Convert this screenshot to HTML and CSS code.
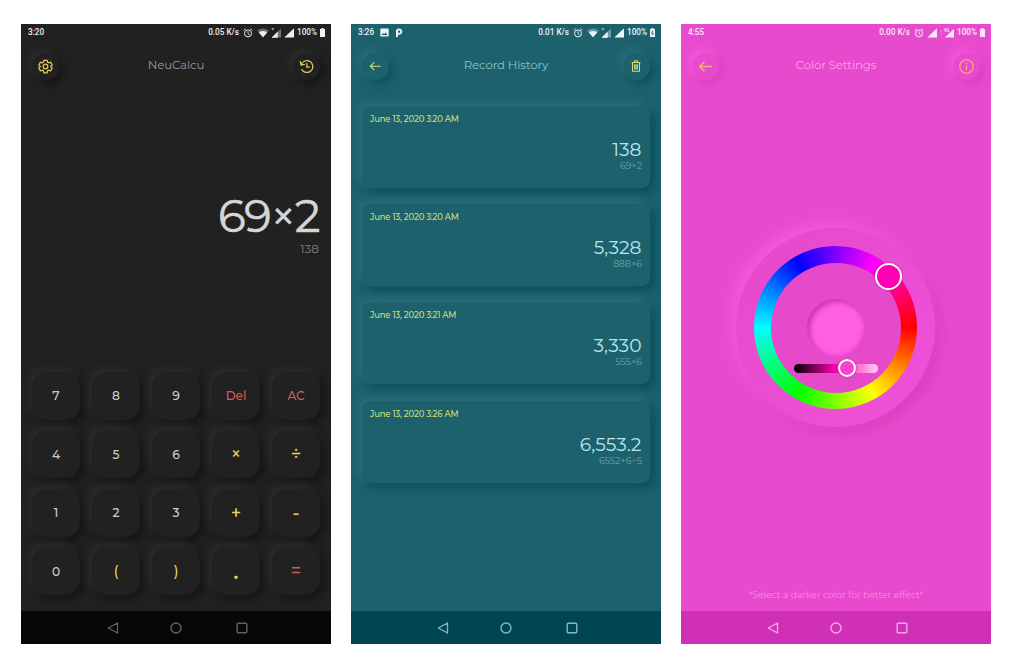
FILE: index.html
```html
<!DOCTYPE html>
<html lang="en">
<head>
<meta charset="utf-8">
<title>NeuCalcu</title>
<link rel="stylesheet" href="styles.css">
</head>
<body>
<svg class="defs" aria-hidden="true">
  <symbol id="alarm" viewBox="0 0 10 10"><g fill="none" stroke="currentColor"><circle cx="5" cy="5.4" r="3.5" stroke-width="1"/><path d="M.6 2.3 2.7.6M9.4 2.3 7.3.6M5 3.3v2.4l1.6 1" stroke-width=".9"/></g></symbol>
  <symbol id="wifi" viewBox="0 0 12 10"><path d="M0 2.5Q6-1.5 12 2.5L6 9.5z" fill="currentColor" opacity=".35"/><path d="M1.8 4.4Q6 1.5 10.2 4.4L6 9.3z" fill="currentColor"/></symbol>
  <symbol id="signal" viewBox="0 0 10 10"><path d="M10 .2V9.5H.3z" fill="currentColor"/></symbol>
  <symbol id="weak" viewBox="0 0 10 10"><path d="M10 .5V9.5H1z" fill="currentColor" opacity=".4"/><path d="M6.4 4.2V9.5H1zM.8 0l2 2m0-2-2 2" fill="currentColor" stroke="currentColor" stroke-width=".6"/></symbol>
  <symbol id="battery" viewBox="0 0 5 9"><path d="M1.4 0h2.2v1H5v8H0V1h1.4z" fill="currentColor"/></symbol>
  <symbol id="back" viewBox="0 0 14 14"><path d="M13 7H1.5M6 2.6 1.5 7 6 11.4" fill="none" stroke="currentColor" stroke-width="1.2"/></symbol>
  <symbol id="nav-back" viewBox="0 0 12 12"><path d="M10.5 1v10L1.3 6z" fill="none" stroke="currentColor" stroke-width="1.3" stroke-linejoin="round"/></symbol>
  <symbol id="nav-home" viewBox="0 0 12 12"><circle cx="6" cy="6" r="5" fill="none" stroke="currentColor" stroke-width="1.4"/></symbol>
  <symbol id="nav-apps" viewBox="0 0 12 12"><rect x="1.2" y="1.2" width="9.6" height="9.6" rx="1" fill="none" stroke="currentColor" stroke-width="1.4"/></symbol>
</svg>
<main class="gallery">
  <section class="phone dark">
    <div class="status">
      <span class="clock">3:20</span>
      <span class="rate">0.05 K/s</span>
      <svg class="i-alarm"><use href="#alarm"/></svg><svg class="i-wifi"><use href="#wifi"/></svg><svg class="i-weak"><use href="#weak"/></svg><svg class="i-signal"><use href="#signal"/></svg>
      <span class="percent">100%</span><svg class="i-battery"><use href="#battery"/></svg>
    </div>
    <header class="bar">
      <button class="round"><svg width="15" height="15" viewBox="0 0 24 24" fill="none" stroke="currentColor" stroke-width="2" stroke-linejoin="round"><path d="M9.4 2h5.2l.7 3.1 1.7 1 3.1-1 2.6 4.5-2.4 2.2v.4l2.4 2.2-2.6 4.5-3.1-1-1.7 1-.7 3.1H9.4l-.7-3.1-1.7-1-3.1 1-2.6-4.5 2.4-2.2v-.4L1.3 9.6l2.6-4.5 3.1 1 1.7-1z"/><circle cx="12" cy="12" r="3.7"/></svg></button>
      <h1>NeuCalcu</h1>
      <button class="round"><svg width="15" height="15" viewBox="0 0 24 24" fill="none" stroke="currentColor" stroke-width="2"><path d="M3.5 9.5A9.5 9.5 0 1 1 4 16M2 3.5l1.3 6.3 6-1.3M12.5 6.5v6.5h5"/></svg></button>
    </header>
    <div class="display"><div class="expression">69×2</div><div class="result">138</div></div>
    <div class="keys">
      <button>7</button><button>8</button><button>9</button><button class="red">Del</button><button class="red">AC</button>
      <button>4</button><button>5</button><button>6</button><button class="op">×</button><button class="op">÷</button>
      <button>1</button><button>2</button><button>3</button><button class="op">+</button><button class="op">-</button>
      <button>0</button><button class="paren">(</button><button class="paren">)</button><button class="op dot">.</button><button class="op red">=</button>
    </div>
    <nav class="nav"><svg><use href="#nav-back"/></svg><svg><use href="#nav-home"/></svg><svg><use href="#nav-apps"/></svg></nav>
  </section>

  <section class="phone teal">
    <div class="status">
      <span class="clock">3:26</span>
      <svg class="i-photo" viewBox="0 0 9 9"><path fill-rule="evenodd" d="M1 .5h7q.7 0 .7.7v6.6q0 .7-.7.7H1q-.7 0-.7-.7V1.2Q.3.5 1 .5zM1.5 7h6L5.6 4.5 4.2 6.2 3.2 5z" fill="currentColor"/></svg>
      <svg class="i-app" viewBox="0 0 8 10"><path d="M2 2.5v5.8M1.9 3.800a2.200 2.200 0 1 1 2.200 2H2" fill="none" stroke="currentColor" stroke-width="2" stroke-linecap="round"/></svg>
      <span class="rate">0.01 K/s</span>
      <svg class="i-alarm"><use href="#alarm"/></svg><svg class="i-wifi"><use href="#wifi"/></svg><svg class="i-weak"><use href="#weak"/></svg><svg class="i-signal"><use href="#signal"/></svg>
      <span class="percent">100%</span><svg class="i-battery" viewBox="0 0 5 9"><path d="M1.4 0h2.2v1H5v8H0V1h1.4z" fill="currentColor"/><path d="M3 2.5 1.5 5.2h2L2 7.5" fill="none" stroke="#1c616c" stroke-width=".8"/></svg>
    </div>
    <header class="bar">
      <button class="round"><svg width="12.5" height="12.5"><use href="#back"/></svg></button>
      <h1>Record History</h1>
      <button class="round"><svg width="10" height="12" viewBox="0 0 10 12" fill="none" stroke="currentColor"><path d="M.5 2.5h9M3.5 2.3V.8h3v1.500M1.500 2.500v8.700h7V2.500M3.600 4.200v5.300M5 4.200v5.300M6.400 4.200v5.300" stroke-width="1.050"/></svg></button>
    </header>
    <div class="records">
      <article><time>June 13, 2020 3:20 AM</time><strong>138</strong><small>69×2</small></article>
      <article><time>June 13, 2020 3:20 AM</time><strong>5,328</strong><small>888×6</small></article>
      <article><time>June 13, 2020 3:21 AM</time><strong>3,330</strong><small>555×6</small></article>
      <article><time>June 13, 2020 3:26 AM</time><strong>6,553.2</strong><small>6552+6÷5</small></article>
    </div>
    <nav class="nav"><svg><use href="#nav-back"/></svg><svg><use href="#nav-home"/></svg><svg><use href="#nav-apps"/></svg></nav>
  </section>

  <section class="phone pink">
    <div class="status">
      <span class="clock">4:55</span>
      <span class="rate">0.00 K/s</span>
      <svg class="i-alarm"><use href="#alarm"/></svg><svg class="i-first"><use href="#signal"/></svg><svg class="i-lte" viewBox="0 0 14 10"><path d="M14 .8v8.700H4.800z" fill="currentColor"/><path d="M1 2v2M1 5v1.500" stroke="currentColor" stroke-width=".7" opacity=".7"/><text x="3.800" y="3.600" font-size="4.500" fill="currentColor">4G</text></svg>
      <span class="percent">100%</span><svg class="i-battery"><use href="#battery"/></svg>
    </div>
    <header class="bar">
      <button class="round"><svg width="15" height="15"><use href="#back"/></svg></button>
      <h1>Color Settings</h1>
      <button class="round"><svg width="15" height="15" viewBox="0 0 15 15" fill="none" stroke="currentColor"><circle cx="7.500" cy="7.500" r="6.700" stroke-width="1.100"/><path d="M7.500 6.200v5M7.500 3.800v1.200" stroke-width="1.100"/></svg></button>
    </header>
    <div class="picker">
      <div class="disc"><div class="hue"><div class="well"><div class="swatch"></div><div class="slider"><i class="thumb"></i></div></div><i class="hue-thumb"></i></div></div>
    </div>
    <p class="hint">*Select a darker color for better effect*</p>
    <nav class="nav"><svg><use href="#nav-back"/></svg><svg><use href="#nav-home"/></svg><svg><use href="#nav-apps"/></svg></nav>
  </section>
</main>
</body>
</html>
```
FILE: styles.css
```css
* { box-sizing: border-box; }
body { margin: 0; background: #fff; font-family: Montserrat, Inter, sans-serif; }
.defs { display: none; }
.gallery { display: flex; gap: 20px; padding: 24px 21px; }
.phone { display: flex; flex-direction: column; width: 310px; height: 620px; background: var(--bg); overflow: hidden; }
.dark { --bg: #212121; --light: #2b2b2b; --shade: #151515; --accent: #e6c95c; --title: #9a9a9a; --nav: #070707; --nav-icon: #626262; --status: #eee; }
.teal { --bg: #1c616c; --light: #276d78; --shade: #0d505b; --accent: #cfdd76; --title: #8fc0c8; --nav: #004652; --nav-icon: #8ab5bc; --status: #e9f5f7; }
.pink { --bg: #e84acd; --light: #f458dc; --shade: #d740be; --accent: #f8b46e; --title: #f9a2e9; --nav: #d030b5; --nav-icon: #f6a6e7; --status: #fde4f9; }
button { padding: 0; border: 0; background: var(--bg); font: inherit; }

.status { display: flex; align-items: center; height: 17px; padding: 0 6px 0 7px; color: var(--status); font: 500 8.2px/17px Roboto, sans-serif; white-space: nowrap; }
.status svg { flex: none; }
.rate { width: 31px; margin-left: auto; text-align: right; }
.i-alarm { width: 10px; height: 10px; margin-left: 4px; }
.i-wifi { width: 12px; height: 10px; margin-left: 4px; }
.i-weak { width: 10px; height: 10px; margin-left: 2px; }
.i-signal { width: 10px; height: 10px; margin-left: 3px; }
.i-first { width: 10px; height: 10px; margin-left: 3px; }
.i-lte { width: 14px; height: 10px; margin-left: 3px; }
.percent { width: 20px; margin-left: 3px; }
.i-battery { width: 5px; height: 9px; margin-left: 3px; }
.i-photo { width: 9px; height: 9px; margin-left: 6px; }
.i-app { width: 8px; height: 10px; margin-left: 6px; }

.bar { display: flex; align-items: center; justify-content: space-between; height: 28px; margin-top: 11px; padding: 0 11px; }
.bar h1 { height: 28px; margin: 0; color: var(--title); font-size: 11.8px; font-weight: 400; line-height: 27px; letter-spacing: -.15px; }
.round { display: flex; align-items: center; justify-content: center; width: 27px; height: 27px; border-radius: 50%; color: var(--accent); box-shadow: -4px -4px 8px var(--light), 4px 4px 8px var(--shade); }

.nav { display: flex; align-items: center; gap: 51px; height: 33px; margin-top: auto; padding-left: 86px; background: var(--nav); color: var(--nav-icon); }
.nav svg { width: 12px; height: 12px; }
.nav svg:last-child { margin-left: 3px; }

.display { height: 183.5px; margin-top: 108px; padding-right: 12px; text-align: right; }
.expression { height: 51px; color: #d6d6d6; font-size: 45.5px; font-weight: 400; line-height: 55px; letter-spacing: -1.6px; -webkit-text-stroke: .5px #d6d6d6; }
.result { color: #808080; font-size: 12px; line-height: 20px; }
.keys { display: grid; grid-template-columns: repeat(5, 48px); grid-auto-rows: 48px; justify-content: space-between; row-gap: 10.6px; padding: 0 11px; }
.keys button { border-radius: 15px; color: #ccc; font-size: 12.3px; font-weight: 500; box-shadow: -4px -4px 8px var(--light), 4px 4px 8px var(--shade); }
.keys .red { color: #cf5b5b; font-size: 12px; }
.keys .op { font-size: 18px; font-weight: 500; }
.keys .op:not(.red) { color: #ead05f; }
.keys .paren { color: #ead05f; font-size: 14px; }
.keys .dot { padding-top: 2px; font-size: 20px; font-weight: 600; }

.records { display: flex; flex-direction: column; gap: 16.2px; padding: 26px 11px; }
.records article { display: flex; flex-direction: column; height: 82px; padding: 8px 8px 0; border-radius: 8px; background: var(--bg); box-shadow: -5px -5px 8px var(--light), 5px 5px 8px var(--shade); }
.records time { color: #cfdd76; font-size: 8.5px; font-weight: 500; line-height: 11px; letter-spacing: -.2px; }
.records strong { margin-top: 13px; padding-right: .5px; color: #b9e6ee; font-size: 18.7px; font-weight: 400; line-height: 24px; text-align: right; }
.records small { color: #6fa3ac; font-size: 9.3px; line-height: 8px; text-align: right; }

.picker { display: flex; justify-content: center; margin-top: 148px; padding-right: 1px; }
.disc { display: flex; align-items: center; justify-content: center; width: 199px; height: 199px; border-radius: 50%; background: linear-gradient(135deg, #e84acd 20%, #ed50d6 80%); box-shadow: -6px -6px 14px var(--light), 6px 6px 14px var(--shade); }
.hue { position: relative; display: flex; align-items: center; justify-content: center; width: 163px; height: 163px; border-radius: 50%; background: conic-gradient(from 90deg, red, yellow, lime, cyan, blue, magenta, red); }
.well { display: flex; flex-direction: column; align-items: center; width: 130px; height: 130px; padding-top: 36px; border-radius: 50%; background: #e64acb; }
.swatch { width: 57px; height: 57px; border-radius: 50%; background: #ff60e2; box-shadow: inset 3px 3px 5px #cc35b2, inset -1px -1px 4px #f04fd5; }
.slider { position: relative; width: 84px; height: 9px; margin-top: 8px; border-radius: 5px; background: linear-gradient(90deg, #000, #ff00b4 50%, #ffd0f3); }
.thumb { position: absolute; left: 44px; top: -4.5px; width: 18px; height: 18px; border: 2px solid #fff; border-radius: 50%; background: #fa43cc; box-shadow: 0 0 2px #a0288a; }
.hue-thumb { position: absolute; left: 121px; top: 17px; width: 27px; height: 27px; border: 2px solid #fff; border-radius: 50%; background: #ff00b4; box-shadow: 0 0 2px #a0288a; }
.hint { margin: auto 0 8px; color: #f78ee5; font-size: 9.2px; line-height: 16px; text-align: center; }
.hint + .nav { margin-top: 0; }
```
